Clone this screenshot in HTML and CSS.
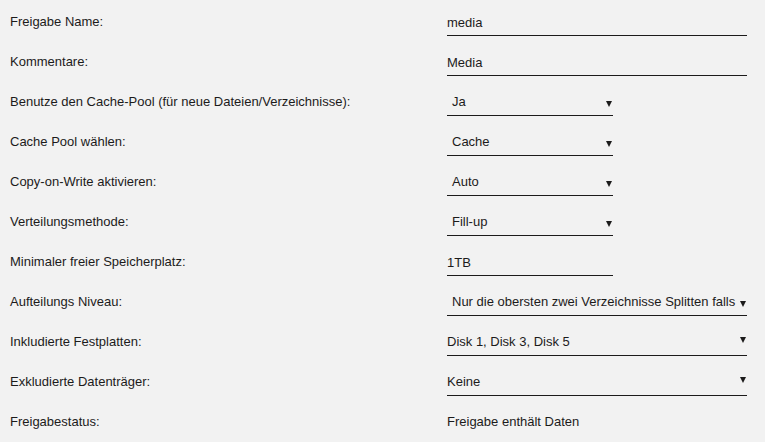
FILE: index.html
```html
<!DOCTYPE html>
<html lang="de">

<head>
  <meta charset="UTF-8">
  <meta name="viewport" content="width=device-width, initial-scale=1.0">
  <title>Freigabe media</title>
  <link rel="stylesheet" href="styles.css">
</head>

<body>

  <form class="share-form">
    <div class="row">
      <label class="row-label" for="shareName">Freigabe Name:</label>
      <div class="row-value">
        <input class="text-field wide" id="shareName" type="text" value="media">
      </div>
    </div>

    <div class="row">
      <label class="row-label" for="shareComment">Kommentare:</label>
      <div class="row-value">
        <input class="text-field wide" id="shareComment" type="text" value="Media">
      </div>
    </div>

    <div class="row">
      <span class="row-label">Benutze den Cache-Pool (für neue Dateien/Verzeichnisse):</span>
      <div class="row-value">
        <div class="dropdown narrow"><span class="dropdown-text">Ja</span><span class="arrow"></span></div>
      </div>
    </div>

    <div class="row">
      <span class="row-label">Cache Pool wählen:</span>
      <div class="row-value">
        <div class="dropdown narrow"><span class="dropdown-text">Cache</span><span class="arrow"></span></div>
      </div>
    </div>

    <div class="row">
      <span class="row-label">Copy-on-Write aktivieren:</span>
      <div class="row-value">
        <div class="dropdown narrow"><span class="dropdown-text">Auto</span><span class="arrow"></span></div>
      </div>
    </div>

    <div class="row">
      <span class="row-label">Verteilungsmethode:</span>
      <div class="row-value">
        <div class="dropdown narrow"><span class="dropdown-text">Fill-up</span><span class="arrow"></span></div>
      </div>
    </div>

    <div class="row">
      <label class="row-label" for="shareFloor">Minimaler freier Speicherplatz:</label>
      <div class="row-value">
        <input class="text-field narrow" id="shareFloor" type="text" value="1TB">
      </div>
    </div>

    <div class="row">
      <span class="row-label">Aufteilungs Niveau:</span>
      <div class="row-value">
        <div class="dropdown wide"><span class="dropdown-text">Nur die obersten zwei Verzeichnisse Splitten falls</span><span class="arrow"></span></div>
      </div>
    </div>

    <!-- disk pickers are checklists, no inner padding -->
    <div class="row">
      <span class="row-label">Inkludierte Festplatten:</span>
      <div class="row-value">
        <div class="dropdown wide checklist"><span class="dropdown-text">Disk 1, Disk 3, Disk 5</span><span class="arrow"></span></div>
      </div>
    </div>

    <div class="row">
      <span class="row-label">Exkludierte Datenträger:</span>
      <div class="row-value">
        <div class="dropdown wide checklist"><span class="dropdown-text">Keine</span><span class="arrow"></span></div>
      </div>
    </div>

    <div class="row">
      <span class="row-label">Freigabestatus:</span>
      <div class="row-value">
        <span class="status">Freigabe enthält Daten</span>
      </div>
    </div>
  </form>

</body>

</html>
```

FILE: styles.css
```css
body {
  margin: 0;
  background-color: #f2f2f2;
  color: #1c1b1b;
  font-family: "Liberation Sans", Arial, sans-serif;
  font-size: 13px;
}

.share-form {
  padding: 2px 0 0 10px;
}

.row {
  display: grid;
  grid-template-columns: 437px 1fr;
  height: 40px;
  padding-top: 10px;
  box-sizing: border-box;
}

.row-label {
  line-height: 20px;
}

.row-value {
  line-height: 20px;
}

/* underlined inputs and selects */
.text-field,
.dropdown {
  display: block;
  box-sizing: border-box;
  height: 24px;
  margin: 0;
  padding: 0 0 3px 0;
  border: 0;
  border-bottom: 1px solid #1c1b1b;
  background: transparent;
  color: inherit;
  font: inherit;
  line-height: 20px;
  outline: none;
}

.wide {
  width: 300px;
}

.narrow {
  width: 166px;
}

.dropdown {
  position: relative;
  padding-left: 5px;
  padding-right: 8px;
}

.dropdown.checklist {
  padding-left: 0;
}

.dropdown-text {
  display: block;
  white-space: nowrap;
}

.arrow {
  position: absolute;
  right: 1px;
  top: 9px;
  width: 0;
  height: 0;
  border-left: 3px solid transparent;
  border-right: 3px solid transparent;
  border-top: 6px solid #1c1b1b;
}

.checklist .arrow {
  top: 5px;
}

.status {
  display: block;
}
```
